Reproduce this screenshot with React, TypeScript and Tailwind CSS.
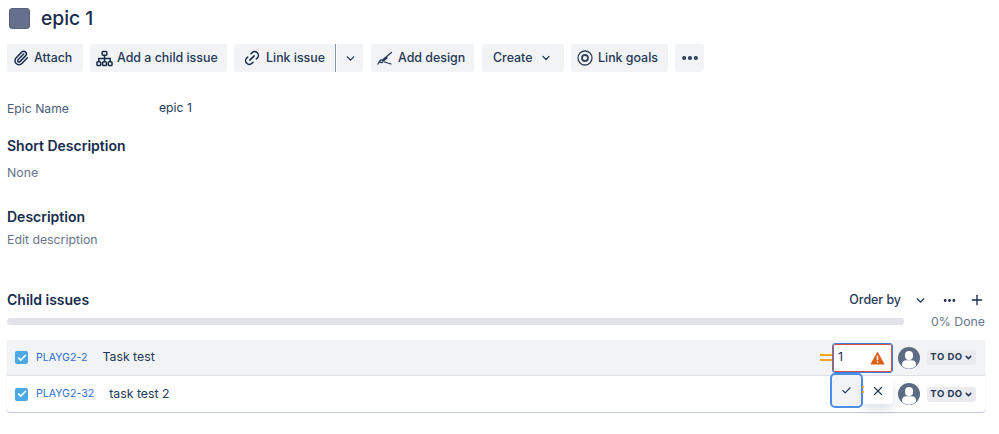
import { ChevronDown, Check, Ellipsis, Link2, Paperclip, Plus, X } from "lucide-react";
import type { ReactNode } from "react";

function ToolButton({ className, children }: { className: string; children: ReactNode }) {
  return (
    <button className={`flex h-7 items-center rounded-[3px] bg-[#f2f3f5] text-[12.4px] font-medium text-[#253858] ${className}`}>
      {children}
    </button>
  );
}

function HierarchyIcon() {
  return (
    <svg width="17" height="17" viewBox="0 0 18 18" fill="none" stroke="#172b4d" strokeWidth="1.6">
      <rect x="6.500" y="1.500" width="5" height="4" rx="1" />
      <rect x="1" y="12.500" width="4" height="4" rx="1" />
      <rect x="7" y="12.500" width="4" height="4" rx="1" />
      <rect x="13" y="12.500" width="4" height="4" rx="1" />
      <path d="M9 5.500v7M3 12.500V9h12v3.500" />
    </svg>
  );
}

function DesignIcon() {
  return (
    <svg width="16" height="16" viewBox="0 0 16 16" fill="none" stroke="#253858" strokeWidth="1.300" strokeLinecap="round">
      <path d="M6 9.500 14.500 2.500" />
      <path d="M7 10 9.500 8" strokeWidth="2.200" />
      <path d="M1 14c1-1 1.200-3.500 3-4 1.500-.4 2.500 1 1.800 2-.6.9-2.200.6-2.800 0M7.500 12l6.500 2" />
    </svg>
  );
}

function GoalIcon() {
  return (
    <svg width="16" height="16" viewBox="0 0 16 16" fill="none" stroke="#33425f" strokeWidth="1.300">
      <circle cx="8" cy="8" r="7" />
      <circle cx="8" cy="8" r="3" strokeWidth="1.800" />
    </svg>
  );
}

function Avatar() {
  return (
    <svg width="22" height="22" viewBox="0 0 22 22" className="shrink-0">
      <circle cx="11" cy="11" r="11" fill="#5e6b84" />
      <rect x="7" y="4" width="8" height="9" rx="4" fill="#fff" />
      <path d="M4 19v-2c0-2.500 2-3.800 4-3.800h6c2 0 4 1.300 4 3.800v2a10.500 10.500 0 0 1-14 0Z" fill="#fff" />
    </svg>
  );
}

function Status() {
  return (
    <span className="ml-[7px] flex h-[15px] w-[49px] items-center justify-center gap-[1px] rounded-[3px] bg-[#e9ebee] text-[9.5px] font-bold tracking-[0.5px] text-[#253858]">
      TO DO
      <ChevronDown size={9} strokeWidth={4} />
    </span>
  );
}

function Tick() {
  return (
    <span className="flex h-[13px] w-[13px] shrink-0 items-center justify-center rounded-[2px] bg-[#4ba9e8]">
      <Check size={10} strokeWidth={4} className="text-white" />
    </span>
  );
}

export default function App() {
  return (
    <div className="relative h-[434px] w-[999px] overflow-hidden bg-white pl-[7px] pr-[14px] font-['Inter',sans-serif] text-[#172b4d]">
      <div className="flex items-center pl-[2px] pt-[8px]">
        <span className="h-[21px] w-[21px] rounded-[3px] border border-[#56627c] bg-[#666f8c]" />
        <h1 className="ml-[11px] text-[19.3px] font-medium leading-[21px]">epic 1</h1>
      </div>

      <div className="mt-[15px] flex">
        <ToolButton className="w-[76px] gap-[5px] pl-[6px]">
          <Paperclip size={16} strokeWidth={2.2} className="text-[#172b4d]" />
          Attach
        </ToolButton>
        <ToolButton className="ml-[7px] w-[137px] gap-[4px] pl-[6px]">
          <HierarchyIcon />
          Add a child issue
        </ToolButton>
        <ToolButton className="ml-[7px] w-[101px] gap-[5px] rounded-r-none pl-[9px]">
          <Link2 size={18} strokeWidth={2} className="-rotate-45 text-[#172b4d]" />
          Link issue
        </ToolButton>
        <div className="w-[1px] bg-[#8a93a5]" />
        <ToolButton className="ml-[1px] w-[26px] justify-center rounded-l-none">
          <ChevronDown size={13} strokeWidth={2.5} />
        </ToolButton>
        <ToolButton className="ml-[8px] w-[103px] gap-[5px] pl-[6px]">
          <DesignIcon />
          Add design
        </ToolButton>
        <ToolButton className="ml-[8px] w-[82px] gap-[8px] pl-[11px]">
          Create
          <ChevronDown size={12} strokeWidth={2.5} />
        </ToolButton>
        <ToolButton className="ml-[7px] w-[97px] gap-[5px] pl-[6px]">
          <GoalIcon />
          Link goals
        </ToolButton>
        <ToolButton className="ml-[7px] w-[29px] justify-center">
          <Ellipsis size={20} strokeWidth={3} />
        </ToolButton>
      </div>

      <div className="mt-[28px] flex text-[12.2px] leading-[16px]">
        <span className="w-[152px] pt-[1px] text-[#4d5c78]">Epic Name</span>
        <span className="text-[#253858]">epic 1</span>
      </div>

      <h2 className="mt-[20px] text-[14px] font-semibold leading-[18px]">Short Description</h2>
      <p className="mt-[10px] text-[12.3px] leading-[16px] text-[#68758d]">None</p>

      <h2 className="mt-[27px] text-[14px] font-semibold leading-[18px]">Description</h2>
      <p className="mt-[6px] text-[12.3px] leading-[16px] text-[#68758d]">Edit description</p>

      <div className="mt-[43px] flex h-[18px] items-center">
        <h2 className="text-[14px] font-semibold leading-[18px]">Child issues</h2>
        <span className="ml-auto text-[12.4px] font-medium text-[#253858]">Order by</span>
        <ChevronDown size={13} strokeWidth={2.5} className="ml-[13px]" />
        <Ellipsis size={15} strokeWidth={2.5} className="ml-[15px]" />
        <Plus size={16} strokeWidth={2} className="ml-[12px]" />
      </div>

      <div className="mt-[5px] flex h-[16px] items-start">
        <div className="mt-[4px] h-[7px] w-[897px] rounded-full bg-[#e1e3e8]" />
        <span className="ml-auto text-[12.3px] leading-[16px] text-[#68758d]">0% Done</span>
      </div>

      <div className="mt-[10px] rounded-[3px] bg-white shadow-[0_1px_1px_rgba(9,30,66,0.25)]">
        <div className="flex h-[36px] items-center rounded-t-[3px] border-b border-[#dfe1e6] bg-[#f2f3f5] pl-[8px] pr-[9px]">
          <Tick />
          <span className="ml-[8px] text-[10.6px] text-[#2b6fd4]">PLAYG2-2</span>
          <span className="ml-[15px] text-[12.3px] text-[#253858]">Task test</span>
          <span className="ml-auto mr-[1px] flex w-[12px] flex-col gap-[3px]">
            <span className="h-[2px] bg-[#f5a623]" />
            <span className="h-[2px] bg-[#f5a623]" />
          </span>
          <div className="flex h-[28px] w-[59px] items-center justify-between rounded-[2px] border border-[#d9503f] bg-white pl-[4px] pr-[6px] text-[12.3px] outline outline-1 outline-[#3a7fe0]">
            1
            <svg width="15" height="14" viewBox="0 0 16 15">
              <path d="M8 .5 15.700 14.500H.3Z" fill="#de5c13" />
              <path d="M7.200 5h1.600v5H7.200ZM7.200 11h1.600v1.600H7.200Z" fill="#fff" />
            </svg>
          </div>
          <span className="ml-[6px]"><Avatar /></span>
          <Status />
        </div>
        <div className="flex h-[36px] items-center pl-[8px] pr-[9px]">
          <Tick />
          <span className="ml-[8px] text-[10.6px] text-[#2b6fd4]">PLAYG2-32</span>
          <span className="ml-[15px] text-[12.3px] text-[#253858]">task test 2</span>
          <span className="ml-auto"><Avatar /></span>
          <Status />
        </div>
      </div>

      <div className="absolute left-[830px] top-[373px] flex h-[35px] items-center">
        <span className="flex h-[35px] w-[33px] items-center justify-center rounded-[5px] border-2 border-[#4b8fec] bg-[#f2f3f5]">
          <Check size={11} strokeWidth={2.5} className="text-[#253858]" />
        </span>
        <span className="absolute left-[32px] top-[13px] flex flex-col gap-[3px]">
          <span className="h-[2px] w-[2px] bg-[#f5a623]" />
          <span className="h-[2px] w-[2px] bg-[#f5a623]" />
        </span>
        <span className="flex h-[27px] w-[30px] items-center justify-center rounded-[3px] bg-white shadow-[0_6px_8px_rgba(9,30,66,0.12)]">
          <X size={14} strokeWidth={2} className="text-[#253858]" />
        </span>
      </div>
    </div>
  );
}
